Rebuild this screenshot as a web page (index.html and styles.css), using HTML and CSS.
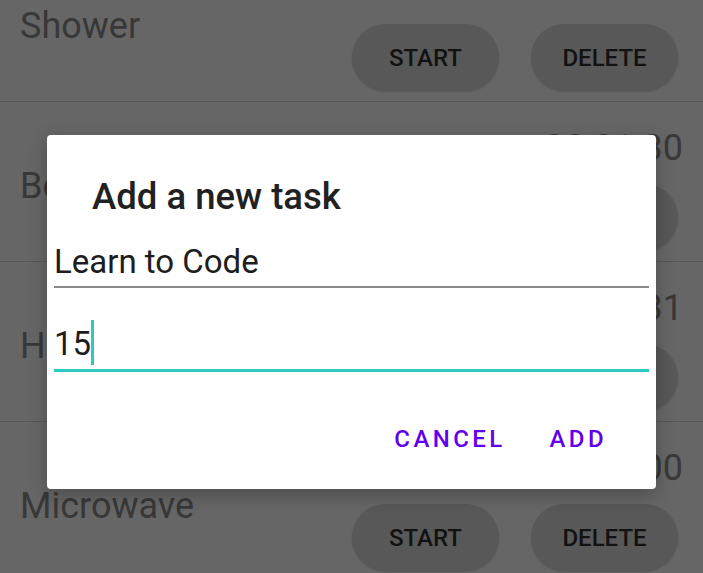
FILE: index.html
```html
<!DOCTYPE html>
<html>
<head>
<meta charset="utf-8">
<link rel="stylesheet" href="styles.css">
</head>
<body>
<div class="screen">
  <div class="list">
    <div class="row">
      <div class="name">Shower</div>
      <div class="side">
        <div class="time">00:00:00</div>
        <div class="actions"><button class="pill">START</button><button class="pill">DELETE</button></div>
      </div>
    </div>
    <div class="row">
      <div class="name">Bedtime</div>
      <div class="side">
        <div class="time">00:01:30</div>
        <div class="actions"><button class="pill">START</button><button class="pill">DELETE</button></div>
      </div>
    </div>
    <div class="row">
      <div class="name">Homework</div>
      <div class="side">
        <div class="time">00:10:31</div>
        <div class="actions"><button class="pill">START</button><button class="pill">DELETE</button></div>
      </div>
    </div>
    <div class="row">
      <div class="name">Microwave</div>
      <div class="side">
        <div class="time">00:02:00</div>
        <div class="actions"><button class="pill">START</button><button class="pill">DELETE</button></div>
      </div>
    </div>
  </div>

  <div class="dialog">
    <div class="dialog-title">Add a new task</div>
    <div class="field">Learn to Code</div>
    <div class="field focused">15<span class="caret"></span></div>
    <div class="dialog-actions">
      <button class="text-btn">CANCEL</button>
      <button class="text-btn">ADD</button>
    </div>
  </div>
</div>
</body>
</html>
```
FILE: styles.css
```css
html, body {
  margin: 0;
  padding: 0;
  background: #666666;
  font-family: Roboto, "Noto Sans", "Liberation Sans", sans-serif;
  overflow: hidden;
}

.screen {
  position: relative;
  width: 703px;
  height: 573px;
  overflow: hidden;
  background: #666666;
}

.list {
  margin-top: -58px;
}

.row {
  box-sizing: border-box;
  height: 160px;
  border-bottom: 1px solid #575757;
  display: flex;
  justify-content: space-between;
  align-items: flex-start;
  padding: 0 20px;
}

.name {
  padding-top: 64px;
  font-size: 36px;
  line-height: 40px;
  color: #383838;
}

.side {
  display: flex;
  flex-direction: column;
  align-items: flex-end;
  padding-top: 26px;
}

.time {
  font-size: 36px;
  line-height: 40px;
  color: #383838;
}

.actions {
  display: flex;
  gap: 32px;
  margin-top: 16px;
  margin-right: 5px;
}

.pill {
  width: 147px;
  height: 67px;
  border: none;
  border-radius: 34px;
  background: #585858;
  color: #121212;
  font-family: inherit;
  font-size: 24px;
  font-weight: 500;
  padding: 0;
  box-shadow: 0 1px 2px rgba(0, 0, 0, 0.15);
}

.dialog {
  position: absolute;
  left: 47px;
  top: 135px;
  width: 609px;
  box-sizing: border-box;
  background: #ffffff;
  border-radius: 4px;
  padding: 40px 7px 36px;
  box-shadow: 0 6px 18px rgba(0, 0, 0, 0.25);
}

.dialog-title {
  margin-left: 38px;
  font-size: 36.5px;
  font-weight: 500;
  line-height: 44px;
  color: #212121;
}

.field {
  margin-top: 23px;
  font-size: 33px;
  line-height: 40px;
  color: #1d1d1d;
  padding-bottom: 4px;
  border-bottom: 2px solid #8a8a8a;
}

.field.focused {
  margin-top: 36px;
  padding-bottom: 4px;
  border-bottom: 3px solid #2ccbbd;
}

.caret {
  display: inline-block;
  width: 3px;
  height: 45px;
  background: #2ccbbd;
  vertical-align: -10px;
  margin-top: -5px;
}

.dialog-actions {
  display: flex;
  justify-content: flex-end;
  gap: 44px;
  margin-top: 53px;
  padding-right: 42px;
}

.text-btn {
  border: none;
  background: none;
  padding: 0;
  font-family: inherit;
  font-size: 24px;
  font-weight: 500;
  line-height: 28px;
  letter-spacing: 3.4px;
  color: #6200ee;
}
```
